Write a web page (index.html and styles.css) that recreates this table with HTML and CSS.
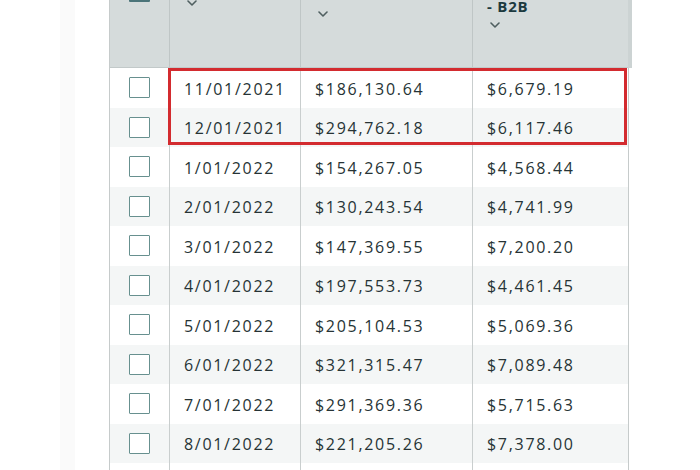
FILE: index.html
```html
<!DOCTYPE html>
<html lang="en">
<head>
<meta charset="utf-8">
<title>Sales by Month</title>
<link rel="stylesheet" href="styles.css">
</head>
<body>
<div class="page">
  <div class="gutter"><div class="band"></div></div>
  <div class="table">
    <div class="thead">
      <div class="th th-check"><span class="cb cb-head"></span></div>
      <div class="th th-date">
        <span class="label">Date</span>
        <svg class="chev" width="10" height="6" viewBox="0 0 10 6"><path d="M1 1 L5 5 L9 1" fill="none" stroke="currentColor" stroke-width="1.6" stroke-linecap="round" stroke-linejoin="round"/></svg>
      </div>
      <div class="th th-sales">
        <span class="label">Ordered Product Sales</span>
        <svg class="chev" width="10" height="6" viewBox="0 0 10 6"><path d="M1 1 L5 5 L9 1" fill="none" stroke="currentColor" stroke-width="1.6" stroke-linecap="round" stroke-linejoin="round"/></svg>
      </div>
      <div class="th th-b2b">
        <span class="label">Ordered Product Sales<br>- B2B</span>
        <svg class="chev" width="10" height="6" viewBox="0 0 10 6"><path d="M1 1 L5 5 L9 1" fill="none" stroke="currentColor" stroke-width="1.6" stroke-linecap="round" stroke-linejoin="round"/></svg>
      </div>
    </div>
    <div class="tbody">
      <div class="row"><div class="td td-check"><span class="cb"></span></div><div class="td">11/01/2021</div><div class="td">$186,130.64</div><div class="td">$6,679.19</div></div>
      <div class="row"><div class="td td-check"><span class="cb"></span></div><div class="td">12/01/2021</div><div class="td">$294,762.18</div><div class="td">$6,117.46</div></div>
      <div class="row"><div class="td td-check"><span class="cb"></span></div><div class="td">1/01/2022</div><div class="td">$154,267.05</div><div class="td">$4,568.44</div></div>
      <div class="row"><div class="td td-check"><span class="cb"></span></div><div class="td">2/01/2022</div><div class="td">$130,243.54</div><div class="td">$4,741.99</div></div>
      <div class="row"><div class="td td-check"><span class="cb"></span></div><div class="td">3/01/2022</div><div class="td">$147,369.55</div><div class="td">$7,200.20</div></div>
      <div class="row"><div class="td td-check"><span class="cb"></span></div><div class="td">4/01/2022</div><div class="td">$197,553.73</div><div class="td">$4,461.45</div></div>
      <div class="row"><div class="td td-check"><span class="cb"></span></div><div class="td">5/01/2022</div><div class="td">$205,104.53</div><div class="td">$5,069.36</div></div>
      <div class="row"><div class="td td-check"><span class="cb"></span></div><div class="td">6/01/2022</div><div class="td">$321,315.47</div><div class="td">$7,089.48</div></div>
      <div class="row"><div class="td td-check"><span class="cb"></span></div><div class="td">7/01/2022</div><div class="td">$291,369.36</div><div class="td">$5,715.63</div></div>
      <div class="row"><div class="td td-check"><span class="cb"></span></div><div class="td">8/01/2022</div><div class="td">$221,205.26</div><div class="td">$7,378.00</div></div>
      <div class="row"><div class="td td-check"><span class="cb"></span></div><div class="td">9/01/2022</div><div class="td">$238,410.12</div><div class="td">$6,402.17</div></div>
    </div>
    <div class="highlight"></div>
  </div>
</div>
</body>
</html>
```
FILE: styles.css
```css
* { box-sizing: border-box; }
html, body { margin: 0; padding: 0; background: #ffffff; }
body { font-family: "Open Sans", "Noto Sans", sans-serif; }

.page {
  display: flex;
  height: 470px;
  overflow: hidden;
  background: #ffffff;
}

.gutter {
  width: 109px;
  flex: none;
  display: flex;
  padding-left: 60px;
}
.band { width: 15px; background: #fafafa; }

.table {
  position: relative;
  flex: none;
  width: 520px;
  margin-top: -33px;
  border-left: 1px solid #c6cbcb;
  border-right: 1px solid #c6cbcb;
  align-self: flex-start;
}

.thead {
  display: grid;
  grid-template-columns: 59px 131px 172px 156px;
  grid-template-rows: 100px;
  height: 101px;
  background: #d5dbdb;
  border-bottom: 1px solid #c2c9c9;
  box-shadow: 4px 0 0 #ccd3d3;
}
.th {
  display: flex;
  flex-direction: column;
  justify-content: flex-end;
  align-items: flex-start;
  overflow: hidden;
  padding-left: 14px;
  border-left: 1px solid #bfc6c6;
  color: #1c3a3f;
}
.th-check {
  border-left: none;
  padding-left: 0;
  align-items: center;
  padding-bottom: 65px;
}
.th-date { padding-bottom: 61px; }
.th-sales { padding-bottom: 50px; }
.th-b2b { padding-bottom: 39px; }

.label {
  flex: none;
  font-size: 14px;
  line-height: 18px;
  font-weight: 700;
  letter-spacing: 0.6px;
  margin-bottom: 10px;
}
.th-b2b .label {
  font-size: 15px;
  line-height: 21px;
  letter-spacing: 0.8px;
  margin-bottom: 5px;
}
.chev {
  display: block;
  flex: none;
  margin-left: 3px;
  color: #4f5f60;
}

.cb {
  display: block;
  flex: none;
  width: 21px;
  height: 21px;
  border: 1.5px solid #67908f;
  border-radius: 1px;
  background: #ffffff;
}
.cb-head {
  border: 2px solid #4b7479;
  background: #d5dbdb;
}

.row {
  display: grid;
  grid-template-columns: 59px 131px 172px 156px;
  height: 39.5px;
  align-items: stretch;
  background: #ffffff;
}
.row:nth-child(even) { background: #f4f6f6; }

.td {
  display: flex;
  align-items: center;
  padding-left: 14px;
  padding-top: 2px;
  border-left: 1px solid #c9cece;
  font-size: 16px;
  font-weight: 500;
  letter-spacing: 1.7px;
  color: #263335;
  white-space: nowrap;
}
.td-check {
  border-left: none;
  padding: 0;
  justify-content: center;
}

.highlight {
  position: absolute;
  left: 58px;
  top: 101px;
  width: 459px;
  height: 77px;
  border: 3px solid #d32b2f;
  pointer-events: none;
}
```
